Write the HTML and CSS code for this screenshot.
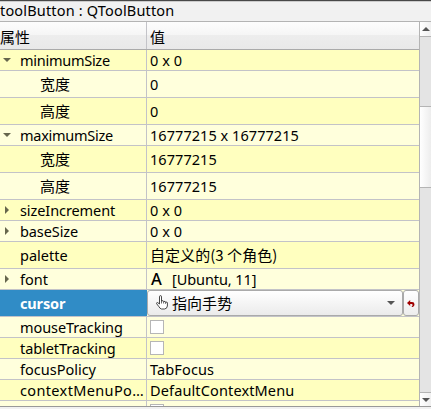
FILE: index.html
```
<!DOCTYPE html>
<html lang="zh-CN">
<head>
<meta charset="utf-8">
<title>Property Editor</title>
<link rel="stylesheet" href="styles.css">
</head>
<body>
<div class="title"><span class="t-title">toolButton : QToolButton</span></div>
<div class="main">
  <div class="table">
    <div class="row head"><div class="name cjk">属性</div><div class="value cjk">值</div></div>
    <div class="row dark"><div class="name"><i class="open"></i><span class="t-min">minimumSize</span></div><div class="value">0 x 0</div></div>
    <div class="row tall"><div class="name child cjk">宽度</div><div class="value">0</div></div>
    <div class="row tall dark"><div class="name child cjk">高度</div><div class="value">0</div></div>
    <div class="row"><div class="name"><i class="open"></i><span class="t-max">maximumSize</span></div><div class="value">16777215 x 16777215</div></div>
    <div class="row tall dark"><div class="name child cjk">宽度</div><div class="value">16777215</div></div>
    <div class="row tall"><div class="name child cjk">高度</div><div class="value">16777215</div></div>
    <div class="row dark"><div class="name"><i class="shut"></i><span class="t-inc">sizeIncrement</span></div><div class="value">0 x 0</div></div>
    <div class="row"><div class="name"><i class="shut"></i><span class="t-base">baseSize</span></div><div class="value">0 x 0</div></div>
    <div class="row tall dark"><div class="name"><span class="t-pal">palette</span></div><div class="value cjk">自定义的(3 个角色)</div></div>
    <div class="row"><div class="name"><i class="shut"></i><span class="t-font">font</span></div><div class="value"><b class="glyph">A</b><span class="t-ubuntu">[Ubuntu, 11]</span></div></div>
    <div class="row tall selected"><div class="name"><span class="t-cursor">cursor</span></div><div class="value editor">
      <div class="combo">
        <svg class="hand" width="12" height="15" viewBox="0 0 12 15"><path d="M3.5 9V1.8Q3.5.6 4.5.6T5.5 1.8V6Q7.5 5 7.7 6.6Q9.4 5.8 9.5 7.2Q11.4 6.5 11.4 8V11Q11 13.8 8.5 14H5.5Q3.8 13.5 3 11.8L.7 8.8Q.3 7.5 1.5 7.5Z" fill="#fff" stroke="#333" stroke-width=".9"/><path d="M5.5 6V8.5M7.6 6.5V8.5M9.5 7.2V8.8" fill="none" stroke="#444" stroke-width=".8"/></svg>
        <span class="cjk">指向手势</span><i class="arrow"></i>
      </div>
      <div class="reset"><svg width="8" height="7" viewBox="0 0 8 7"><path d="M0 3L3.2 0V2H5Q7.5 2 7.5 4.4Q7.5 6 5.7 7H4.5Q5.8 5.7 5.6 4.8Q5.4 4 4.5 4H3.2V6Z" fill="#a00000"/></svg></div>
    </div></div>
    <div class="row"><div class="name"><span class="t-mouse">mouseTracking</span></div><div class="value"><i class="check"></i></div></div>
    <div class="row dark"><div class="name"><span class="t-tablet">tabletTracking</span></div><div class="value"><i class="check"></i></div></div>
    <div class="row"><div class="name"><span class="t-focus">focusPolicy</span></div><div class="value"><span class="t-tab">TabFocus</span></div></div>
    <div class="row dark"><div class="name"><span class="t-ctx">contextMenuPo…</span></div><div class="value"><span class="t-def">DefaultContextMenu</span></div></div>
    <div class="row last"><div class="name"></div><div class="value"><i class="check"></i></div></div>
  </div>
  <div class="scroll">
    <div class="btn up"><i></i></div>
    <div class="track"><div class="thumb"></div></div>
    <div class="btn down"><i></i></div>
  </div>
</div>
</body>
</html>
```
FILE: styles.css
```
* { box-sizing: border-box; }
body {
  margin: 0; width: 431px; height: 409px; overflow: hidden;
  background: #f1f1f1; color: #000;
  font: 14.5px/20px "Noto Sans", "Noto Sans CJK SC", sans-serif;
  white-space: nowrap;
}
.title { height: 22px; line-height: 19px; border-top: 1px solid #484848; border-bottom: 1px solid #b4b4b4; box-shadow: inset 0 1px #ccc; }
.t-title { letter-spacing: .17px; }
.t-min, .t-max { letter-spacing: -.27px; }
.t-inc, .t-base, .t-mouse, .t-tablet { letter-spacing: -.09px; }
.t-cursor { letter-spacing: -.15px; }
.t-ctx { letter-spacing: .36px; }
.t-def, .t-tab { letter-spacing: .13px; }
.main { display: flex; height: 385px; border-bottom: 1px solid #999; overflow: hidden; }
.table { width: 419px; }
.row { display: flex; height: 21px; background: #ffffdc; border-bottom: 1px solid #c3c3c8; }
.tall { height: 27px; line-height: 26px; }
.dark { background: #ffffbf; }
.head { height: 28px; line-height: 29px; background: linear-gradient(#fdfdfd, #f5f5f5 50%, #ededed 50%, #e9e9e9); border-color: #aaa; }
.name { width: 147px; padding-left: 20px; border-right: 1px solid #c3c3c8; position: relative; }
.head .name { padding-left: 0; }
.value { flex: 1; padding-left: 3px; display: flex; align-items: flex-start; letter-spacing: .05px; }
.name.child { padding-left: 40px; }
.cjk { font-family: "Noto Sans CJK SC", sans-serif; font-size: 15px; }
.open, .shut { position: absolute; width: 0; height: 0; }
.open { left: 3px; top: 8px; border: 4px solid transparent; border-top-color: #66664d; border-bottom: 0; }
.shut { left: 5px; top: 6px; border: 4px solid transparent; border-left-color: #66664d; border-right: 0; }
.glyph { width: 21px; font: 500 16.5px/19px "Noto Sans", sans-serif; padding-left: 1px; margin-right: 1px; }
.t-ubuntu { letter-spacing: -.08px; }
.selected .name { background: #308cc6; color: #fff; font-weight: bold; border-color: #308cc6; }
.editor { padding: 0; }
.combo { width: 256px; height: 26px; border: 1px solid #aaa; border-radius: 3px; background: linear-gradient(#fff, #ebebeb); display: flex; align-items: center; }
.combo .cjk { margin-left: 4px; line-height: 24px; }
.hand { margin: -2px 0 0 8px; }
.arrow { margin-left: auto; margin-right: 7px; border: 4px solid transparent; border-top-color: #555; border-bottom: 0; }
.reset { width: 16px; height: 26px; border: 1px solid #aaa; border-radius: 3px; background: linear-gradient(#fff, #ededed); display: flex; align-items: center; justify-content: center; }
.check { width: 14px; height: 14px; margin-top: 3px; border: 1px solid #b6b6b6; background: #fff; }
.last { height: 6px; overflow: hidden; border-bottom: 0; }
.scroll { width: 12px; border-left: 1px solid #b4b4b4; display: flex; flex-direction: column; background: #e4e4e4; }
.btn { height: 14px; background: linear-gradient(90deg, #fff, #f0f0f0); display: flex; align-items: center; justify-content: center; }
.btn i { border: 4px solid transparent; }
.up { height: 15px; border-bottom: 1px solid #b4b4b4; }
.up i { border-bottom-color: #555; border-top: 0; }
.down { border-top: 1px solid #b4b4b4; }
.down i { border-top-color: #555; border-bottom: 0; }
.track { flex: 1; padding-top: 69px; }
.thumb { height: 82px; border: solid #b4b4b4; border-width: 1px 0; background: linear-gradient(90deg, #fff, #ededed); }
```
